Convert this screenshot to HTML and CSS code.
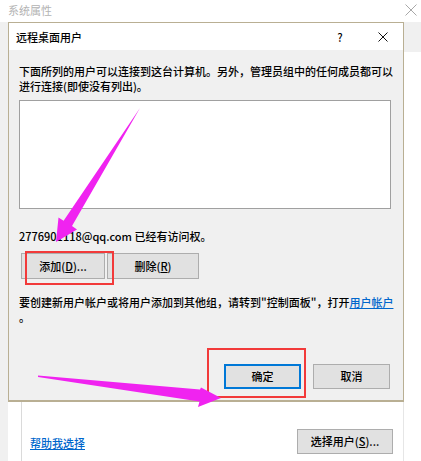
FILE: index.html
```html
<!DOCTYPE html>
<html lang="zh-CN">
<head>
<meta charset="utf-8">
<title>远程桌面用户</title>
<link rel="stylesheet" href="styles.css">
</head>
<body>
<div class="screen">
  <div class="parent-title">
    <span class="ptitle">系统属性</span>
    <svg class="pclose" width="12" height="12" viewBox="0 0 12 12"><path d="M0.5 0.5 L11.5 11.5 M11.5 0.5 L0.5 11.5" stroke="#a8a8a8" stroke-width="1" fill="none"/></svg>
  </div>
  <div class="middle">
    <div class="gutter-left"></div>
    <div class="dialog">
      <div class="titlebar">
        <span class="dtitle">远程桌面用户</span>
        <span class="help">?</span>
        <svg class="dclose" width="10" height="10" viewBox="0 0 10 10"><path d="M0.5 0.5 L9.5 9.5 M9.5 0.5 L0.5 9.5" stroke="#111" stroke-width="1" fill="none"/></svg>
      </div>
      <div class="dbody">
        <p class="desc">下面所列的用户可以连接到这台计算机。另外，管理员组中的任何成员都可以<br>进行连接(即使没有列出)。</p>
        <div class="listbox"></div>
        <p class="access"><span class="email">2776901118@qq.com</span> 已经有访问权。</p>
        <div class="btnrow">
          <button class="btn add">添加(<u>D</u>)...</button>
          <button class="btn remove">删除(<u>R</u>)</button>
        </div>
        <p class="info">要创建新用户帐户或将用户添加到其他组，请转到"控制面板"，打开<a class="link">用户帐户</a><br>。</p>
        <div class="footer">
          <button class="btn ok">确定</button>
          <button class="btn cancel">取消</button>
        </div>
      </div>
    </div>
    <div class="gutter-right"><div class="band"></div></div>
  </div>
  <div class="lower">
    <div class="lower-gutter"></div>
    <div class="lower-pad"></div>
    <div class="lower-panel">
      <a class="link help-link">帮助我选择</a>
      <button class="btn select">选择用户(<u>S</u>)...</button>
    </div>
  </div>
  <svg class="annot" width="421" height="461" viewBox="0 0 421 461">
    <rect x="26" y="252" width="87" height="32" fill="none" stroke="#f23a3a" stroke-width="2"/>
    <rect x="208" y="349" width="97" height="48" fill="none" stroke="#f23a3a" stroke-width="2"/>
    <polygon points="140,108 72,226 77,229.5 56,242 58.5,217.6 63.6,220.8" fill="#f023f0"/>
    <polygon points="38,375.5 200,389.5 201,387.5 221,398 198,407 199.5,401.5 38,377" fill="#f023f0"/>
  </svg>
</div>
</body>
</html>
```
FILE: styles.css
```css
* { box-sizing: border-box; }
html, body { margin: 0; padding: 0; }
body {
  width: 421px;
  height: 461px;
  overflow: hidden;
  background: #fff;
  font-family: "Noto Sans CJK SC", "Noto Sans", sans-serif;
  color: #000;
}
.screen {
  position: relative;
  width: 421px;
  height: 461px;
  display: flex;
  flex-direction: column;
}
.parent-title {
  height: 22px;
  display: flex;
  align-items: center;
  justify-content: space-between;
  padding: 0 4px 2px 8px;
}
.ptitle { font-size: 11px; line-height: 14px; color: #b3b3b3; }

.middle { display: flex; height: 380px; }
.gutter-left { width: 8px; background: #f0f0f0; }
.gutter-right { flex: 1; }
.band { height: 30px; background: #f0f0f0; }

.dialog {
  width: 396px;
  border: 1px solid #b9af93;
  border-bottom-width: 2px;
  background: #f0f0f0;
  display: flex;
  flex-direction: column;
  font-weight: 500;
}
.titlebar {
  height: 27px;
  background: #fff;
  display: flex;
  align-items: center;
  padding: 0 15px 0 7px;
}
.dtitle { flex: 1; font-size: 11px; line-height: 14px; }
.help { width: 12px; text-align: center; font-size: 11px; margin-right: 32px; }

.dbody {
  flex: 1;
  display: flex;
  flex-direction: column;
  padding: 14px 12px 11px 10px;
  font-size: 11px;
  line-height: 15px;
}
.desc { margin: 0; white-space: nowrap; }
.listbox {
  margin-top: 6px;
  height: 109px;
  background: #fff;
  border: 1px solid #a0a0a0;
}
.access { margin: 20px 0 0; line-height: 14px; }
.btnrow { margin-top: 10px; display: flex; gap: 2px; padding-left: 2px; }
.btn {
  font-family: inherit;
  font-size: 11px;
  font-weight: 500;
  line-height: 1;
  color: #000;
  background: #e1e1e1;
  border: 1px solid #adadad;
  padding: 0;
  height: 26px;
}
.add { width: 84px; }
.remove { width: 92px; }
.info { margin: 16px 0 0; white-space: nowrap; }
.link { color: #0066cc; text-decoration: underline; }
.footer {
  margin-top: auto;
  display: flex;
  justify-content: flex-end;
  gap: 12px;
  padding-right: 1px;
}
.ok, .cancel { width: 77px; height: 25px; }
.ok { border-color: #0078d7; box-shadow: inset 0 0 0 1px #0078d7; }

.lower { display: flex; height: 59px; }
.lower-gutter { width: 8px; background: #f0f0f0; }
.lower-pad { width: 13px; }
.lower-panel {
  width: 383px;
  border-left: 1px solid #dadada;
  border-right: 1px solid #e6e6e6;
  display: flex;
  justify-content: space-between;
  align-items: flex-end;
  padding: 0 10px 7px 8px;
}
.help-link { font-size: 11px; line-height: 14px; margin-bottom: 4px; font-weight: 500; }
.select { width: 96px; height: 25px; }

.annot { position: absolute; left: 0; top: 0; pointer-events: none; }
```
